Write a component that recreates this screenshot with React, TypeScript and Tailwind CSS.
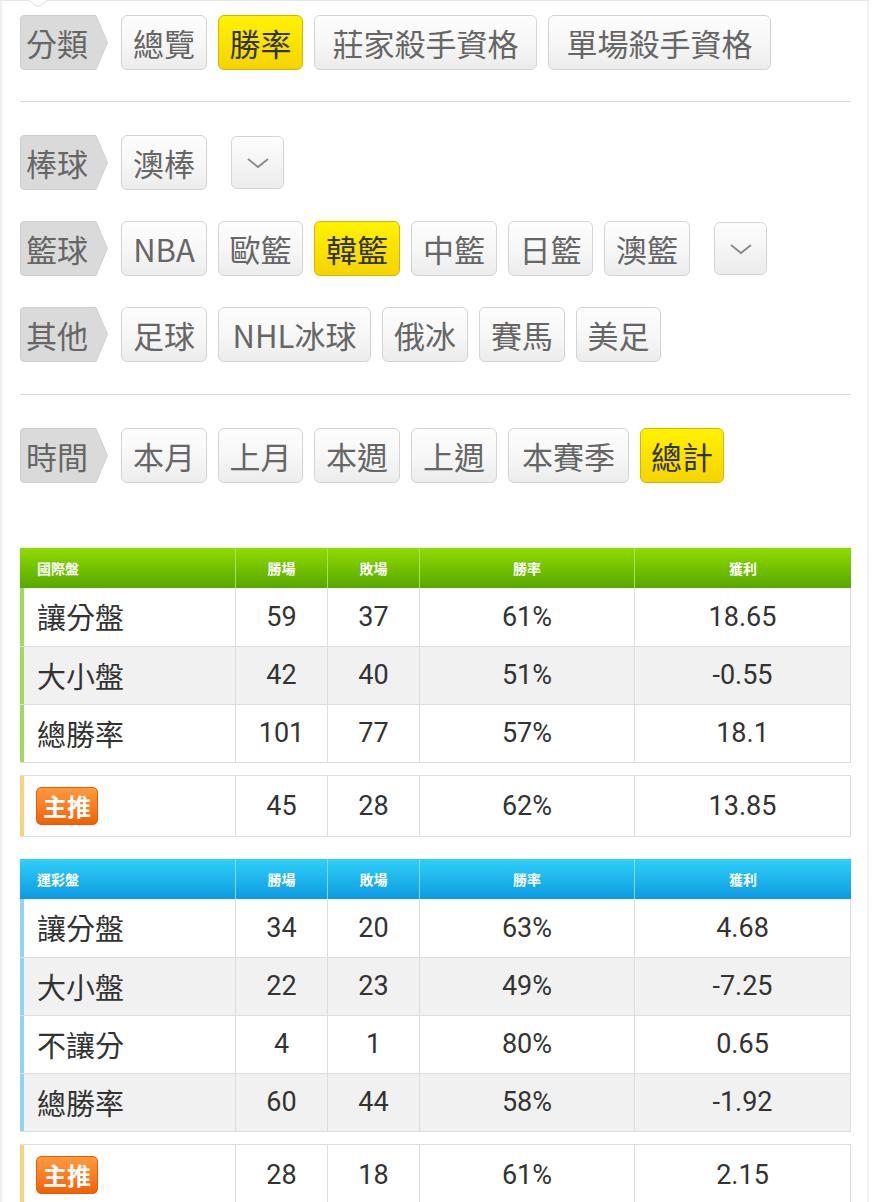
import React from 'react'

const cjk = { fontFamily: '"Noto Sans CJK TC", "Noto Sans", sans-serif' }
const num = { fontFamily: 'Roboto, "Noto Sans CJK TC", sans-serif' }

function Tag({ text }: { text: string }) {
  return (
    <div className="relative h-[55px] w-[88px] shrink-0">
      <svg className="absolute inset-0" width="88" height="55" viewBox="0 0 88 55">
        <path d="M4 0.5 H76 L87.5 27.5 L76 54.5 H4 Q0.5 54.5 0.5 51 V4 Q0.5 0.5 4 0.5 Z" fill="#dadada" stroke="#cfcfcf" />
      </svg>
      <span className="relative flex h-full items-center pl-[6px] text-[31px] leading-none text-[#666]" style={cjk}>
        {text}
      </span>
    </div>
  )
}

function Btn({ text, on, w }: { text: string; on?: boolean; w?: string }) {
  return (
    <div
      className={
        'flex h-[55px] shrink-0 items-center justify-center rounded-[6px] border text-[31px] leading-none ' +
        (on
          ? 'border-[#d6b300] bg-gradient-to-b from-[#fff200] to-[#f5d400] text-[#333]'
          : 'border-[#d4d4d4] bg-gradient-to-b from-[#fdfdfd] via-[#f7f7f7] to-[#ececec] text-[#666]') +
        ' ' +
        (w ?? 'w-[86px]')
      }
      style={cjk}
    >
      {text}
    </div>
  )
}

function Drop({ ml }: { ml: string }) {
  return (
    <div
      className={
        'flex h-[53px] w-[53px] shrink-0 items-center justify-center rounded-[6px] border border-[#d4d4d4] bg-gradient-to-b from-[#fdfdfd] to-[#ececec] ' +
        ml
      }
    >
      <svg width="24" height="12" viewBox="0 0 24 12">
        <path d="M2 2 L12 10 L22 2" fill="none" stroke="#888" strokeWidth="1.8" />
      </svg>
    </div>
  )
}

function Row({ label, children }: { label: string; children: React.ReactNode }) {
  return (
    <div className="flex items-center">
      <Tag text={label} />
      <div className="ml-[13px] flex items-center gap-[11px]">{children}</div>
    </div>
  )
}

type Line = [string, string, string, string, string]

function Table({
  title,
  rows,
  pick,
  head,
  sep,
  edge,
}: {
  title: string
  rows: Line[]
  pick: Line
  head: string
  sep: string
  edge: string
}) {
  const cols = 'grid grid-cols-[215px_92px_92px_215px_1fr]'
  return (
    <div>
      <div className={cols + ' h-[40px] text-[14px] font-bold text-white ' + head} style={cjk}>
        <div className="flex items-center pl-[17px]">{title}</div>
        {['勝場', '敗場', '勝率', '獲利'].map(h => (
          <div key={h} className={'flex items-center justify-center border-l ' + sep}>
            {h}
          </div>
        ))}
      </div>
      <div className="border-b border-r border-[#ddd]">
        {rows.map((r, i) => (
          <div key={i} className={cols + ' h-[58px] border-t border-[#ddd] first:border-t-0 ' + (i % 2 ? 'bg-[#f1f1f1]' : 'bg-white')}>
            <div className={'flex items-center border-l-4 pl-[13px] text-[29px] text-[#333] ' + edge} style={cjk}>
              {r[0]}
            </div>
            {r.slice(1).map((v, j) => (
              <div key={j} className="flex items-center justify-center border-l border-[#ddd] text-[27px] text-[#333]" style={num}>
                {v}
              </div>
            ))}
          </div>
        ))}
      </div>
      <div className={cols + ' mt-[12px] h-[62px] border-y border-r border-[#ddd] bg-white'}>
        <div className="flex items-center border-l-4 border-[#f8d27c] pl-[12px]">
          <span
            className="flex h-[38px] w-[62px] items-center justify-center rounded-[5px] border border-[#e0600a] bg-gradient-to-b from-[#ff9a3c] to-[#f06000] text-[24px] font-bold text-white"
            style={cjk}
          >
            主推
          </span>
        </div>
        {pick.slice(1).map((v, j) => (
          <div key={j} className="flex items-center justify-center border-l border-[#ddd] text-[27px] text-[#333]" style={num}>
            {v}
          </div>
        ))}
      </div>
    </div>
  )
}

export default function App() {
  return (
    <div className="relative min-h-[1202px] w-[873px] overflow-hidden bg-white">
      <div className="absolute left-0 top-0 h-full w-[4px] bg-gradient-to-r from-[#ececec] to-white" />
      <div className="absolute right-[4px] top-0 h-full w-[2px] bg-[#f1f1f1]" />
      <div className="absolute left-0 top-0 h-[1px] w-[868px] bg-[#e6e6e6]" />
      <svg className="absolute left-[28px] top-0" width="20" height="8" viewBox="0 0 20 8">
        <path d="M0 0 L10 7 L20 0" fill="#fff" stroke="#e0e0e0" />
      </svg>

      <div className="px-[20px] pt-[15px] pr-[22px]">
        <Row label="分類">
          <Btn text="總覽" />
          <Btn text="勝率" on w="w-[85px]" />
          <Btn text="莊家殺手資格" w="w-[223px]" />
          <Btn text="單場殺手資格" w="w-[223px]" />
        </Row>

        <div className="mb-[33px] mt-[31px] h-px bg-[#d9d9d9]" />

        <div className="flex flex-col gap-[31px]">
          <div className="flex items-center">
            <Tag text="棒球" />
            <div className="ml-[13px] flex items-center">
              <Btn text="澳棒" />
              <Drop ml="ml-[24px]" />
            </div>
          </div>
          <div className="flex items-center">
            <Tag text="籃球" />
            <div className="ml-[13px] flex items-center gap-[11px]">
              <Btn text="NBA" />
              <Btn text="歐籃" w="w-[85px]" />
              <Btn text="韓籃" on />
              <Btn text="中籃" />
              <Btn text="日籃" w="w-[85px]" />
              <Btn text="澳籃" />
            </div>
            <Drop ml="ml-[24px]" />
          </div>
          <Row label="其他">
            <Btn text="足球" />
            <Btn text="NHL冰球" w="w-[153px]" />
            <Btn text="俄冰" />
            <Btn text="賽馬" />
            <Btn text="美足" w="w-[85px]" />
          </Row>
        </div>

        <div className="mb-[33px] mt-[32px] h-px bg-[#d9d9d9]" />

        <Row label="時間">
          <Btn text="本月" />
          <Btn text="上月" w="w-[85px]" />
          <Btn text="本週" />
          <Btn text="上週" />
          <Btn text="本賽季" w="w-[121px]" />
          <Btn text="總計" on w="w-[84px]" />
        </Row>

        <div className="mt-[65px]">
          <Table
            title="國際盤"
            head="bg-gradient-to-b from-[#8fdc00] to-[#56a800]"
            sep="border-[#a6e25a]"
            edge="border-l-[#a3d95e]"
            rows={[
              ['讓分盤', '59', '37', '61%', '18.65'],
              ['大小盤', '42', '40', '51%', '-0.55'],
              ['總勝率', '101', '77', '57%', '18.1'],
            ]}
            pick={['主推', '45', '28', '62%', '13.85']}
          />
        </div>

        <div className="mt-[22px]">
          <Table
            title="運彩盤"
            head="bg-gradient-to-b from-[#2fd0f8] to-[#0c9ae0]"
            sep="border-[#7fdcf8]"
            edge="border-l-[#8fd5f2]"
            rows={[
              ['讓分盤', '34', '20', '63%', '4.68'],
              ['大小盤', '22', '23', '49%', '-7.25'],
              ['不讓分', '4', '1', '80%', '0.65'],
              ['總勝率', '60', '44', '58%', '-1.92'],
            ]}
            pick={['主推', '28', '18', '61%', '2.15']}
          />
        </div>
      </div>
    </div>
  )
}
